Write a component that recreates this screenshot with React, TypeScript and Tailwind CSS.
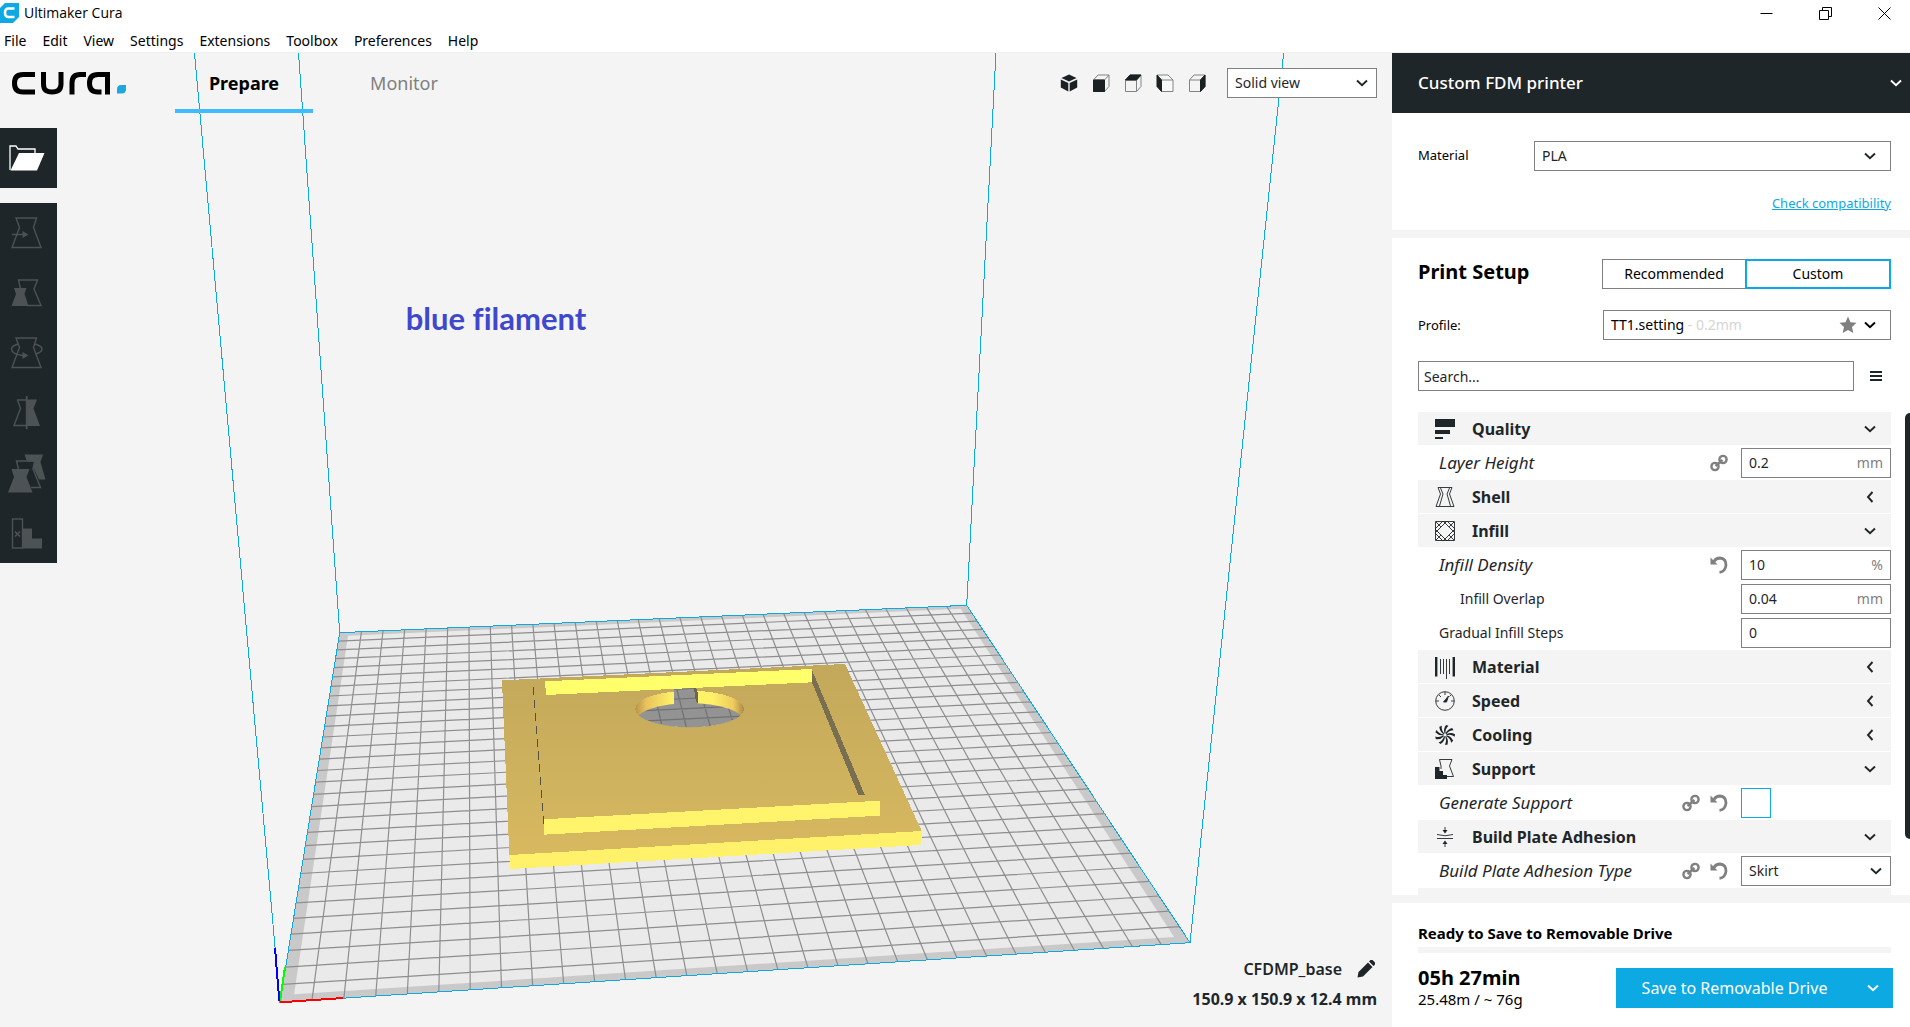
import React, { useState } from "react";

const FONT = "font-['Noto_Sans','Open_Sans',sans-serif]";
const GRID_CELLS = 30;

type Point = [number, number];

// Build plate corners: back left, back right, front right, front left
const PLATE: Point[] = [
    [339.7, 632.7],
    [966.7, 605.3],
    [1190, 942.7],
    [280, 1002.3],
];

// Maps plate coordinates (0..1 on both axes) to the perspective view
const project = (u: number, v: number): Point => {
    const [[x0, y0], [x1, y1], [x2, y2], [x3, y3]] = PLATE;
    const dx1 = x1 - x2;
    const dx2 = x3 - x2;
    const dx3 = x0 - x1 + x2 - x3;
    const dy1 = y1 - y2;
    const dy2 = y3 - y2;
    const dy3 = y0 - y1 + y2 - y3;
    const det = dx1 * dy2 - dx2 * dy1;
    const g = (dx3 * dy2 - dx2 * dy3) / det;
    const h = (dx1 * dy3 - dx3 * dy1) / det;
    const w = g * u + h * v + 1;
    return [
        ((x1 - x0 + g * x1) * u + (x3 - x0 + h * x3) * v + x0) / w,
        ((y1 - y0 + g * y1) * u + (y3 - y0 + h * y3) * v + y0) / w,
    ];
};

const toPoints = (points: Point[]) =>
    points.map(([x, y]) => `${x.toFixed(1)},${y.toFixed(1)}`).join(" ");

const segment = (a: Point, b: Point) => `M${toPoints([a])}L${toPoints([b])}`;

const gridPath = Array.from({ length: GRID_CELLS - 1 }, (_, index) => {
    const t = (index + 1) / GRID_CELLS;
    return (
        segment(project(t, 0), project(t, 1)) +
        segment(project(0, t), project(1, t))
    );
}).join("");

const INSET = 0.0135;
const innerPlate: Point[] = [
    project(INSET, INSET),
    project(1 - INSET, INSET),
    project(1 - INSET, 1 - INSET),
    project(INSET, 1 - INSET),
];

const BuildVolume: React.FC = () => (
    <svg
        className="absolute inset-0 w-full h-full"
        viewBox="0 53 1392 974"
        preserveAspectRatio="xMidYMid slice"
        aria-hidden="true"
    >
        <defs>
            <linearGradient id="top-face" x1="0" y1="0" x2="0" y2="1">
                <stop offset="0" stopColor="#c2a85b" />
                <stop offset="1" stopColor="#d8b960" />
            </linearGradient>
            <linearGradient id="hole-wall" x1="0" y1="0" x2="1" y2="0">
                <stop offset="0" stopColor="#b8944c" />
                <stop offset="0.1" stopColor="#e8c35c" />
                <stop offset="0.35" stopColor="#fff269" />
                <stop offset="0.7" stopColor="#fff269" />
                <stop offset="0.9" stopColor="#efcb5e" />
                <stop offset="1" stopColor="#a98b49" />
            </linearGradient>
            <clipPath id="hole">
                <ellipse cx="689.7" cy="709" rx="54.3" ry="18.3" />
            </clipPath>
            <clipPath id="hole-floor">
                <ellipse
                    cx="689.7"
                    cy="721.5"
                    rx="54"
                    ry="18.3"
                    clipPath="url(#hole)"
                />
                <polygon points="674,689 694,688 698,704 698,712 674,712" />
            </clipPath>
        </defs>
        <polygon points={toPoints(PLATE)} fill="#c9c9c9" />
        <polygon points={toPoints(innerPlate)} fill="#eaeaea" />
        <path d={gridPath} stroke="#8e8e90" strokeWidth="1.2" fill="none" />
        <g stroke="#0ca9e3" fill="none" shapeRendering="crispEdges">
            <polygon points={toPoints(PLATE)} />
            <path d="M280 1002L194.5 53M339.7 632.7L298.5 53M966.7 605.3L996 53M1190 942.7L1283.7 53" />
        </g>
        <g strokeWidth="2" shapeRendering="crispEdges">
            <path d="M280 1002.3L343 998" stroke="#ff0000" />
            <path d="M280 1001L285 967" stroke="#00ff00" />
            <path d="M279.3 1001L275 948" stroke="#0000ff" />
        </g>

        <g shapeRendering="crispEdges">
            <polygon
                points="502,680.3 845,664 921.7,831 509.3,855"
                fill="url(#top-face)"
            />
            <polygon
                points="509.3,855 921.7,831 921.7,837 920.3,845 510,869"
                fill="#fff26a"
            />
            <ellipse
                cx="689.7"
                cy="709"
                rx="54.3"
                ry="18.3"
                fill="url(#hole-wall)"
            />
        </g>
        <g clipPath="url(#hole-floor)">
            <rect x="630" y="680" width="120" height="60" fill="#939393" />
            <path d={gridPath} stroke="#717171" strokeWidth="1.2" />
        </g>
        <g shapeRendering="crispEdges">
            <polygon
                points="694,688 697.3,689 698.3,703.3 696,702"
                fill="#6c6550"
            />
            <polygon
                points="545,681.3 812,669 812,682.3 546,695"
                fill="#ffff6c"
            />
            <polygon
                points="812,670 864.7,794.7 858.3,794.7 812,682.3"
                fill="#776f50"
            />
            <polygon
                points="544,819.3 879.7,800.7 879.7,815.7 544,834.7"
                fill="#fff46b"
            />
            <path
                d="M533.3 686.7L543.7 823.7"
                stroke="#55503f"
                strokeDasharray="8 5"
            />
        </g>
    </svg>
);

const Chevron: React.FC<{ closed?: boolean }> = ({ closed }) => (
    <svg
        width="14"
        height="14"
        viewBox="0 0 14 14"
        fill="none"
        stroke="currentColor"
        strokeWidth="1.9"
        className="shrink-0 pointer-events-none"
    >
        <path d={closed ? "M9.5 2L5 7L9.5 12" : "M2 4.5L7 9.3L12 4.5"} />
    </svg>
);

const AppIcon: React.FC = () => (
    <svg width="19" height="20" viewBox="0 0 19 20">
        <path d="M5 0H19V14L13 20H0V5Z" fill="#0ca9e3" />
        <path
            d="M14.5 5.5H8.5Q5 5.5 5 9.5Q5 14 8.5 14H14.5"
            fill="none"
            stroke="#fff"
            strokeWidth="2.6"
        />
    </svg>
);

const CuraLogo: React.FC = () => (
    <svg width="116" height="26" viewBox="0 0 116 26" aria-label="cura" role="img">
        <g fill="none" stroke="#000" strokeWidth="5">
            <path d="M25 4.500H13C7 4.500 4.500 8 4.500 13.200S7 22 13 22H25" />
            <path d="M33.500 2V14C33.500 19.500 36 22 42 22S51 19.500 51 14V2" />
            <path d="M62 24.500V13C62 7.500 64.500 4.500 70 4.500H76" />
            <path d="M97.500 24.500V4.500H88C82 4.500 79.500 8 79.500 13.200S82 22 88 22H91.500" />
        </g>
        <path
            d="M111 15H116V19Q116 23.500 111.500 23.500H107V19.500Q107 15 111 15Z"
            fill="#1ca8dd"
        />
    </svg>
);

const OpenIcon: React.FC = () => (
    <svg width="36" height="26" viewBox="0 0 36 26">
        <path
            d="M1 25V1H7L9 4H26V8"
            fill="none"
            stroke="#fff"
            strokeWidth="1.3"
        />
        <path d="M10 8H35.500L28 25.500H1.500Z" fill="#fff" />
    </svg>
);

const TOOLS = [
    {
        name: "Move",
        drawing: (
            <>
                <path d="M6 3H26.500L23.500 12.500L31 32.500H2L9.500 12.500Z" fill="none" />
                <path d="M2 19.500H13" />
                <path d="M12.500 16L18.500 19.500L12.500 23Z" fill="#4d5254" stroke="none" />
            </>
        ),
    },
    {
        name: "Scale",
        drawing: (
            <>
                <path d="M10.500 14L8.500 5H27.500L24 14L31 30.500H17" fill="none" />
                <path
                    d="M4 13H16.500L14.500 19L18.500 31H1.500L6 19Z"
                    fill="#4d5254"
                    stroke="none"
                />
            </>
        ),
    },
    {
        name: "Rotate",
        drawing: (
            <>
                <path d="M6 3H26.500L23.500 12.500L31 32.500H2L9.500 12.500Z" fill="none" />
                <path
                    d="M8 9Q1.500 11 1.500 14Q1.500 19 13 20.500M25 9Q32 11 32 14Q32 17 26 19"
                    fill="none"
                />
                <path d="M12.500 17L18.500 20.500L12.500 24Z" fill="#4d5254" stroke="none" />
            </>
        ),
    },
    {
        name: "Mirror",
        drawing: (
            <>
                <path d="M16.500 5H7.500L10.500 13.500L4 30.500H16.500" fill="none" />
                <path
                    d="M17 4.500H27L23.500 13.500L30 31H17Z"
                    fill="#4d5254"
                    stroke="none"
                />
                <path d="M16.700 1V34" strokeWidth="1.800" />
            </>
        ),
    },
    {
        name: "Per Model Settings",
        drawing: (
            <>
                <path
                    d="M14.500 -0.500H33L30.500 7L35.500 24.500H29L23 12L25 6.500H17Z"
                    fill="#4d5254"
                    stroke="none"
                />
                <path d="M8.500 14L6.500 6H24.500L23 14L30.500 32.500H21" fill="none" />
                <path
                    d="M1.500 14H19.500L16.500 22L22.500 37.500H-2L4 22Z"
                    fill="#4d5254"
                    stroke="none"
                />
            </>
        ),
    },
    {
        name: "Support Blocker",
        drawing: (
            <>
                <rect x="2.500" y="4" width="10" height="29" fill="none" />
                <path d="M5 16.500L10 21.500M10 16.500L5 21.500" strokeWidth="1.600" />
                <path
                    d="M13 13.500H22V23.500H32V33.500H13Z"
                    fill="#4d5254"
                    stroke="none"
                />
            </>
        ),
    },
];

const CUBE_FACES = {
    front: "M1.500 6H12.500V17.500H1.500Z",
    top: "M1.500 6L6 1H17L12.500 6Z",
    left: "M1 1V12.500L5.500 17.500V6Z",
    right: "M12.500 6L17 1V12.500L12.500 17.500Z",
};

const ViewIcon: React.FC<{ face: string }> = ({ face }) => {
    if (face === "3D") {
        return (
            <svg width="18" height="18" viewBox="0 0 18 18" fill="#1b2023">
                <path d="M9 0.500L16.500 4L9 7.500L1.500 4Z" />
                <path d="M0.800 5.500L8.300 9V17.500L0.800 13.500ZM17.200 5.500L9.700 9V17.500L17.200 13.500Z" />
            </svg>
        );
    }
    return (
        <svg width="18" height="18" viewBox="0 0 18 18" fill="none" stroke="#808487">
            {face === "left" ? (
                <path d="M5.500 6H17V17.500H5.500ZM1 1H12L17 6" fill="#f8f8f8" />
            ) : (
                <path d="M1.500 6H12.500V17.500H1.500ZM1.500 6L6 1H17L12.500 6M17 1V12.500L12.500 17.500" />
            )}
            <path
                d={CUBE_FACES[face as keyof typeof CUBE_FACES]}
                fill="#1b2023"
                stroke="#1b2023"
            />
        </svg>
    );
};

const CATEGORY_ICONS: Record<string, React.ReactNode> = {
    Quality: (
        <g fill="#1f2629" stroke="none">
            <rect y="0" width="20" height="8" />
            <rect y="11" width="15" height="4" />
            <rect y="18" width="8" height="2" />
        </g>
    ),
    Shell: (
        <path d="M3 0.500H17L14.500 7L19 19.500H1L5.500 7ZM5.500 1L8 7L4.500 19M14.500 1L12 7L15.500 19" />
    ),
    Infill: (
        <path d="M0.500 0.500H19.500V19.500H0.500ZM0 8L8 0M0 12L12 0M8 20L20 8M12 20L20 12M8 0L20 12M12 0L20 8M0 8L12 20M0 12L8 20M1 1L6 6M19 1L14 6M1 19L6 14M19 19L14 14" />
    ),
    Material: (
        <>
            <path d="M1.200 0V19.500M18.800 0V19.500" strokeWidth="2.400" />
            <path d="M5.500 2V17M8.500 2V17M11.500 2V22M14.500 2V17" />
        </>
    ),
    Speed: (
        <>
            <circle cx="10" cy="10" r="9.300" />
            <path d="M10 1V4M4 4L6 6M1 10H4M16 10H19M14.500 5.500L16 4" />
            <path d="M13.500 5L11.500 11L8.500 11Z" fill="#1f2629" />
        </>
    ),
    Cooling: (
        <g fill="#1f2629" stroke="none">
            {[0, 40, 80, 120, 160, 200, 240, 280, 320].map((angle) => (
                <path
                    key={angle}
                    d="M9.500 8.500Q8 4 11 0L13.500 0.800Q10 4 10.500 8.500Z"
                    transform={`rotate(${angle} 10 10)`}
                />
            ))}
        </g>
    ),
    Support: (
        <>
            <path d="M6 10V7L4.500 0.500H17L14.500 7L18.500 17.500H12" />
            <path d="M0 8H4.500V12H8V16H12V20H0Z" fill="#1f2629" stroke="none" />
        </>
    ),
    "Build Plate Adhesion": (
        <>
            <path d="M2 7.500Q10 10 18 7.500M2 11.500H18M10 0V3M10 17V20" />
            <path d="M7.500 3H12.500L10 6.500ZM7.500 17H12.500L10 13.500Z" fill="#1f2629" stroke="none" />
        </>
    ),
};

const LinkIcon: React.FC = () => (
    <svg width="18" height="18" viewBox="0 0 18 18" fill="none" stroke="#808080">
        <circle cx="5" cy="12.500" r="3.600" strokeWidth="2.400" />
        <circle cx="13" cy="5.500" r="3.600" strokeWidth="2.400" />
        <path d="M5.500 12L12.500 6" strokeWidth="2.400" />
    </svg>
);

const ResetIcon: React.FC = () => (
    <svg width="18" height="18" viewBox="0 0 18 18">
        <path
            d="M4 5.500Q6 2 10 2Q16 2.500 16 9Q15.500 15.500 9.500 16.300"
            fill="none"
            stroke="#808080"
            strokeWidth="2.800"
        />
        <path d="M0.500 1.500L7.500 8.500H0.500Z" fill="#808080" />
    </svg>
);

type Setting = {
    kind: "setting";
    label: string;
    value?: string;
    unit?: string;
    control?: "select" | "checkbox";
    linked?: boolean;
    changed?: boolean;
    emphasized?: boolean;
    nested?: boolean;
};

type Category = { kind: "category"; label: string; closed?: boolean };

const ROWS: (Setting | Category)[] = [
    { kind: "category", label: "Quality" },
    { kind: "setting", label: "Layer Height", value: "0.2", unit: "mm", linked: true, emphasized: true },
    { kind: "category", label: "Shell", closed: true },
    { kind: "category", label: "Infill" },
    { kind: "setting", label: "Infill Density", value: "10", unit: "%", changed: true, emphasized: true },
    { kind: "setting", label: "Infill Overlap", value: "0.04", unit: "mm", nested: true },
    { kind: "setting", label: "Gradual Infill Steps", value: "0" },
    { kind: "category", label: "Material", closed: true },
    { kind: "category", label: "Speed", closed: true },
    { kind: "category", label: "Cooling", closed: true },
    { kind: "category", label: "Support" },
    { kind: "setting", label: "Generate Support", control: "checkbox", linked: true, changed: true, emphasized: true },
    { kind: "category", label: "Build Plate Adhesion" },
    { kind: "setting", label: "Build Plate Adhesion Type", value: "Skirt", control: "select", linked: true, changed: true, emphasized: true },
];

const Select: React.FC<{
    id?: string;
    label?: string;
    options: string[];
    className: string;
    wide?: boolean;
}> = ({ id, label, options, className, wide }) => (
    <div className={`relative flex items-center ${className}`}>
        <select
            id={id}
            aria-label={label}
            className="w-full h-[30px] appearance-none rounded-none border border-[#808080] bg-white pl-[7px] pr-8 text-sm text-[#1f2629]"
        >
            {options.map((option) => (
                <option key={option}>{option}</option>
            ))}
        </select>
        <span
            className={`absolute text-[#1f2629] pointer-events-none ${wide ? "right-[14px]" : "right-[8px]"}`}
        >
            <Chevron />
        </span>
    </div>
);

const CategoryRow: React.FC<Category> = ({ label, closed }) => (
    <button
        type="button"
        aria-expanded={!closed}
        className="w-full h-[33px] mb-px shrink-0 flex items-center bg-[#f4f4f4] pl-[17px] pr-[14px] text-[#1f2629]"
    >
        <svg
            width="20"
            height="20"
            viewBox="0 0 20 20"
            fill="none"
            stroke="#1f2629"
            strokeWidth="0.9"
            className="overflow-visible shrink-0"
        >
            {CATEGORY_ICONS[label]}
        </svg>
        <span className="ml-[17px] grow text-left text-base font-bold">
            {label}
        </span>
        <Chevron closed={closed} />
    </button>
);

const SettingRow: React.FC<Setting> = (props) => {
    const { label, value, unit, control, linked, changed, emphasized, nested } =
        props;
    const id = label.toLowerCase().replace(/ /g, "-");
    return (
        <div
            className={`h-[34px] shrink-0 flex items-center ${nested ? "pl-[42px]" : "pl-[21px]"}`}
        >
            <label
                htmlFor={id}
                className={`grow ${emphasized ? "text-[17px] leading-6 italic" : "text-sm"} text-[#1f2629]`}
            >
                {label}
            </label>
            <div className="flex gap-[10px] mr-[13px]">
                {linked ? <LinkIcon /> : null}
                {changed ? <ResetIcon /> : null}
            </div>
            {control === "select" ? (
                <Select id={id} options={[value ?? ""]} className="w-[150px]" />
            ) : null}
            {control === "checkbox" ? (
                <div className="w-[150px] flex">
                    <input
                        id={id}
                        type="checkbox"
                        className="w-[30px] h-[30px] appearance-none border border-[#0ca9e3] bg-white"
                    />
                </div>
            ) : null}
            {!control ? (
                <div className="w-[150px] h-[30px] flex items-center border border-[#808080] px-[7px] text-sm">
                    <input
                        id={id}
                        defaultValue={value}
                        className="min-w-0 grow bg-transparent text-[#1f2629] outline-none"
                    />
                    <span className="text-[#808080]">{unit}</span>
                </div>
            ) : null}
        </div>
    );
};

const TitleBar: React.FC = () => (
    <div className="h-[26px] shrink-0 flex items-center justify-between">
        <div className="flex items-center gap-[5px]">
            <AppIcon />
            <span className="font-['Open_Sans',sans-serif] text-sm">
                Ultimaker Cura
            </span>
        </div>
        <div className="flex gap-[46px] pr-[19px]">
            <button type="button" aria-label="Minimize">
                <svg width="13" height="13" viewBox="0 0 13 13" stroke="#000">
                    <path d="M0.500 6.500H12.500" />
                </svg>
            </button>
            <button type="button" aria-label="Restore">
                <svg width="13" height="13" viewBox="0 0 13 13" fill="none" stroke="#000">
                    <path d="M0.500 3.500H9.500V12.500H0.500ZM3.500 3.500V0.500H12.500V9.500H9.500" />
                </svg>
            </button>
            <button type="button" aria-label="Close">
                <svg width="13" height="13" viewBox="0 0 13 13" stroke="#000">
                    <path d="M0.500 0.500L12.500 12.500M12.500 0.500L0.500 12.500" />
                </svg>
            </button>
        </div>
    </div>
);

const MENU = ["File", "Edit", "View", "Settings", "Extensions", "Toolbox", "Preferences", "Help"];

const MenuBar: React.FC = () => (
    <nav className="h-[27px] shrink-0 flex items-center gap-4 pl-1 pt-1 border-b border-[#f0f0f0] text-sm">
        {MENU.map((item) => (
            <button type="button" key={item}>
                {item}
            </button>
        ))}
    </nav>
);

const Viewport: React.FC = () => (
    <main className="relative grow min-w-0 overflow-hidden bg-[#f4f4f4]">
        <BuildVolume />
        <p className="absolute top-[26%] left-[29%] mt-[-6px] ml-[2px] font-['Lato',sans-serif] text-[31px] leading-9 font-bold text-[#3f48cc] [font-variant-ligatures:none]">
            blue filament
        </p>
        <div className="relative h-full flex flex-col">
            <header className="h-[60px] shrink-0 flex items-center pl-[10px] pr-[15px]">
                <CuraLogo />
                <div className="ml-[49px] h-full flex gap-[22px] text-lg">
                    <button
                        type="button"
                        className="w-[138px] h-full pt-1 border-b-4 border-[#3fbcfb] font-bold text-black"
                    >
                        Prepare
                    </button>
                    <button
                        type="button"
                        className="w-[138px] h-full pt-1 border-b-4 border-transparent text-[#808080]"
                    >
                        Monitor
                    </button>
                </div>
                <div className="grow" />
                <div className="flex gap-[14px] mr-[21px]">
                    {["3D", "front", "top", "left", "right"].map((face) => (
                        <button type="button" key={face} aria-label={`${face} view`}>
                            <ViewIcon face={face} />
                        </button>
                    ))}
                </div>
                <Select label="View mode" options={["Solid view"]} className="w-[150px]" />
            </header>
            <div className="grow pt-[15px] flex flex-col items-start gap-[15px]">
                <button
                    type="button"
                    aria-label="Open File"
                    className="w-[57px] h-[60px] pl-[9px] bg-[#1f2629] flex items-center"
                >
                    <OpenIcon />
                </button>
                <div className="w-[57px] bg-[#1f2629] flex flex-col">
                    {TOOLS.map(({ name, drawing }) => (
                        <button
                            type="button"
                            key={name}
                            aria-label={name}
                            className="h-[60px] pl-[10px] flex items-center"
                        >
                            <svg
                                width="36"
                                height="36"
                                viewBox="0 0 36 36"
                                stroke="#4d5254"
                                strokeWidth="1.4"
                                className="overflow-visible"
                            >
                                {drawing}
                            </svg>
                        </button>
                    ))}
                </div>
            </div>
            <footer className="shrink-0 flex flex-col items-end gap-[10px] pr-[15px] pb-[18px] text-base leading-5 text-[#1f2629]">
                <div className="flex items-center gap-[15px] pr-[2px] font-semibold">
                    <span>CFDMP_base</span>
                    <button type="button" aria-label="Rename">
                        <svg width="18" height="18" viewBox="0 0 18 18" fill="#1f2629">
                            <path d="M11 2.500L15.500 7L6 16.500L0.500 17.500L1.500 12ZM12 1.500L13.500 0H15.500L18 2.500V4.500L16.500 6Z" />
                        </svg>
                    </button>
                </div>
                <span className="font-bold">150.9 x 150.9 x 12.4 mm</span>
            </footer>
        </div>
    </main>
);

const PrintSetup: React.FC = () => {
    const [mode, setMode] = useState("Custom");
    return (
        <section className="relative grow min-h-0 flex flex-col bg-white pl-[26px] pr-[19px] pt-[21px]">
            <div className="flex justify-between items-center h-[30px]">
                <h2 className="text-xl leading-6 font-bold pb-1">Print Setup</h2>
                <div className="flex w-[289px]">
                    {["Recommended", "Custom"].map((item) => (
                        <button
                            type="button"
                            key={item}
                            onClick={() => setMode(item)}
                            className={`flex-1 h-[30px] text-sm ${mode === item ? "border-2 border-[#0ca9e3]" : "border border-r-0 border-[#808080]"}`}
                        >
                            {item}
                        </button>
                    ))}
                </div>
            </div>
            <div className="mt-[21px] flex justify-between items-center text-sm">
                <span id="profile-label" className="text-[13px]">Profile:</span>
                <button
                    type="button"
                    aria-labelledby="profile-label"
                    aria-haspopup="listbox"
                    className="w-[288px] h-[30px] flex items-center border border-[#808080] pl-[7px] pr-[13px]"
                >
                    <span>
                        TT1.setting <span className="text-[#d5d5d5]">- 0.2mm</span>
                    </span>
                    <svg width="18" height="18" viewBox="0 0 18 18" fill="#808080" className="ml-auto mr-[6px]">
                        <path d="M9 0.500L11.500 6.200L17.500 6.800L13 11L14.300 17L9 13.900L3.700 17L5 11L0.500 6.800L6.500 6.200Z" />
                    </svg>
                    <Chevron />
                </button>
            </div>
            <div className="mt-[21px] flex items-center">
                <input
                    type="text"
                    aria-label="Search settings"
                    placeholder="Search..."
                    className="grow h-[30px] border border-[#808080] px-[5px] text-sm placeholder:text-[#1f2629]"
                />
                <button type="button" aria-label="Setting visibility" className="ml-4 mr-[9px]">
                    <svg width="12" height="12" viewBox="0 0 12 12" fill="#1f2629">
                        <path d="M0 1H12V3H0ZM0 5H12V7H0ZM0 9H12V11H0Z" />
                    </svg>
                </button>
            </div>
            <div className="mt-[21px] grow min-h-0 overflow-hidden flex flex-col">
                {ROWS.map((row) =>
                    row.kind === "category" ? (
                        <CategoryRow key={row.label} {...row} />
                    ) : (
                        <SettingRow key={row.label} {...row} />
                    ),
                )}
                <div className="h-[33px] shrink-0 bg-[#f4f4f4]" />
            </div>
            <div className="absolute right-0 top-[175px] bottom-14 w-[5px] rounded-l-full bg-[#1f2629]" />
        </section>
    );
};

const Sidebar: React.FC = () => (
    <aside className="w-[518px] shrink-0 flex flex-col bg-[#f4f4f4]">
        <button
            type="button"
            className="h-[60px] shrink-0 flex items-center justify-between bg-[#1f2629] pl-[26px] pr-[7px] text-[17px] font-medium text-white"
        >
            Custom FDM printer
            <Chevron />
        </button>
        <section className="h-[117px] shrink-0 bg-white pl-[26px] pr-[19px] pt-7">
            <div className="flex items-center justify-between">
                <label htmlFor="material" className="text-[13px]">
                    Material
                </label>
                <Select id="material" options={["PLA"]} className="w-[357px]" wide />
            </div>
            <div className="mt-[22px] text-right text-[13px] leading-5">
                <a href="#compatibility" className="text-[#0ca9e3] underline">
                    Check compatibility
                </a>
            </div>
        </section>
        <div className="h-2 shrink-0" />
        <PrintSetup />
        <div className="h-2 shrink-0" />
        <section className="h-[124px] shrink-0 bg-white pl-[26px] pr-[17px] pt-5">
            <p className="text-[15px] leading-5 font-bold">
                Ready to Save to Removable Drive
            </p>
            <div className="mt-1 mr-[2px] h-[6px] bg-[#f4f4f4]" />
            <div className="mt-[14px] flex items-center justify-between">
                <div>
                    <p className="text-xl leading-[22px] font-bold">05h 27min</p>
                    <p className="text-[15px] leading-5">25.48m / ~ 76g</p>
                </div>
                <div className="w-[277px] h-10 flex bg-[#0ca9e3] text-white">
                    <button type="button" className="grow text-base">
                        Save to Removable Drive
                    </button>
                    <button
                        type="button"
                        aria-label="More save options"
                        className="w-10 flex items-center justify-center"
                    >
                        <Chevron />
                    </button>
                </div>
            </div>
        </section>
    </aside>
);

const App: React.FC = () => (
    <div className={`h-screen flex flex-col overflow-hidden bg-white text-black ${FONT}`}>
        <TitleBar />
        <MenuBar />
        <div className="grow min-h-0 flex">
            <Viewport />
            <Sidebar />
        </div>
    </div>
);

export default App;
